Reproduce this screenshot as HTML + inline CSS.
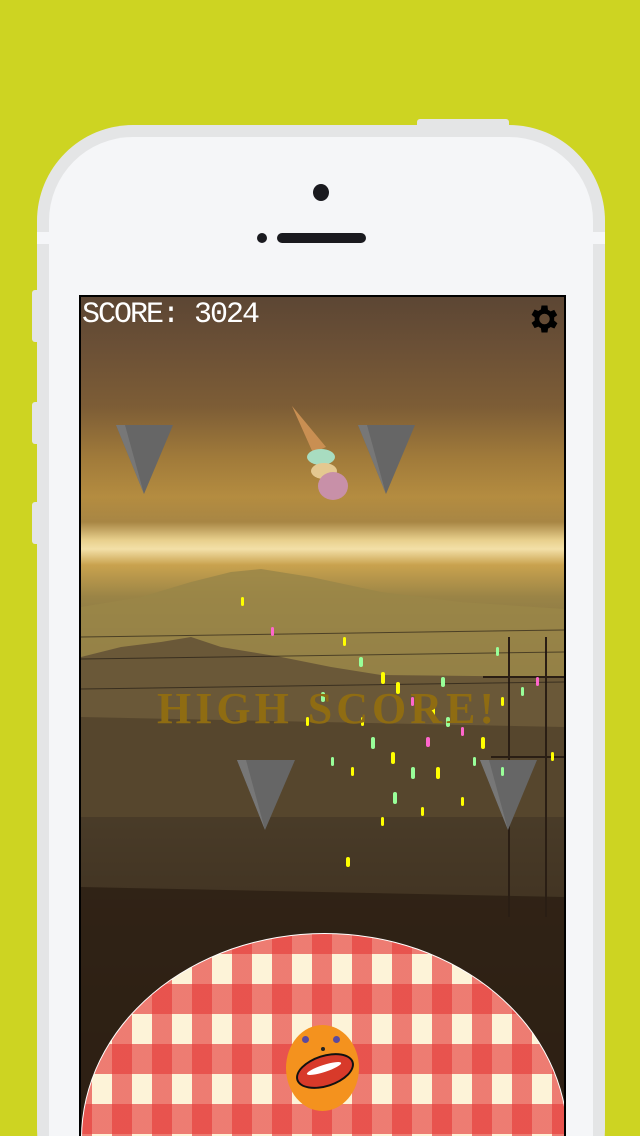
<!DOCTYPE html>
<html><head><meta charset="utf-8"><style>
*{margin:0;padding:0}
html,body{width:640px;height:1136px;overflow:hidden}
body{background:#cdd422;position:relative;font-family:"Liberation Sans",sans-serif}
.abs{position:absolute}
</style></head><body>
<div class="abs" style="left:32px;top:290px;width:8px;height:52px;background:#e4e5e6;border-radius:3px"></div>
<div class="abs" style="left:32px;top:402px;width:8px;height:42px;background:#e4e5e6;border-radius:3px"></div>
<div class="abs" style="left:32px;top:502px;width:8px;height:42px;background:#e4e5e6;border-radius:3px"></div>
<div class="abs" style="left:417px;top:119px;width:92px;height:10px;background:#e4e5e6;border-radius:3px"></div>
<div class="abs" style="left:37px;top:125px;width:568px;height:1100px;background:#e4e5e6;border-radius:96px"></div>
<div class="abs" style="left:49px;top:137px;width:544px;height:1100px;background:#f5f6f8;border-radius:84px"></div>
<div class="abs" style="left:37px;top:232px;width:12px;height:12px;background:#f5f6f8"></div>
<div class="abs" style="left:593px;top:232px;width:12px;height:12px;background:#f5f6f8"></div>
<div class="abs" style="left:313px;top:184px;width:16px;height:17px;background:#1a1a1f;border-radius:50%"></div>
<div class="abs" style="left:257px;top:233px;width:10px;height:10px;background:#1a1a1f;border-radius:50%"></div>
<div class="abs" style="left:277px;top:233px;width:89px;height:10px;background:#1a1a1f;border-radius:5px"></div>
<div class="abs" style="left:79px;top:295px;width:487px;height:845px;background:#000"></div>
<div class="abs" style="left:81px;top:297px;width:483px;height:840px;overflow:hidden;background:linear-gradient(#5c4634 0px,#6e5236 60px,#7d5d36 110px,#a07a3a 160px,#b48c40 200px,#a88644 225px,#e8cf8c 243px,#f3e0a8 252px,#c9a24e 268px,#9a8446 300px,#7a6a42 360px,#5e5038 430px,#4a3e2c 520px,#35291c 620px,#24190f 840px)">
<svg width="483" height="840" style="position:absolute;left:0;top:0">
<polygon points="0,310 60,300 110,285 150,275 180,272 230,280 300,295 380,305 483,312 483,420 0,420" fill="#9a8648" opacity=".85"/>
<polygon points="0,360 40,350 80,345 110,340 140,350 170,355 200,360 250,370 300,378 483,380 483,520 0,520" fill="#6a5838"/>
<polygon points="0,420 483,430 483,840 0,840" fill="#4a3a26" opacity=".6"/>
<polygon points="0,590 483,600 483,840 0,840" fill="#24180e" opacity=".6"/>
<g stroke="#2a1e14" stroke-width="2" fill="none">
<line x1="428" y1="340" x2="428" y2="620"/><line x1="465" y1="340" x2="465" y2="620"/>
<line x1="402" y1="380" x2="483" y2="380"/><line x1="410" y1="460" x2="483" y2="460"/>
</g>
<g stroke="#1a1410" stroke-width="1" opacity=".6" fill="none">
<line x1="0" y1="340" x2="483" y2="333"/><line x1="0" y1="362" x2="483" y2="355"/><line x1="0" y1="392" x2="483" y2="385"/>
</g>
<polygon points="35,128 92,128 63,197" fill="#666"/><polygon points="35,128 44,128 63,197" fill="#777"/>
<polygon points="277,128 334,128 305,197" fill="#666"/><polygon points="277,128 286,128 305,197" fill="#777"/>
<polygon points="156,463 214,463 184,533" fill="#666"/><polygon points="156,463 165,463 184,533" fill="#777"/>
<polygon points="399,463 456,463 427,533" fill="#666"/><polygon points="399,463 408,463 427,533" fill="#777"/>
<polygon points="211,109 245,150 232,156" fill="#c98f52"/>
<ellipse cx="240" cy="160" rx="14" ry="8" fill="#a8dcc0"/>
<ellipse cx="243" cy="174" rx="13" ry="8" fill="#e4c890"/>
<ellipse cx="252" cy="189" rx="15" ry="14" fill="#c890a8"/>
<g>
<rect x="160" y="300" width="3" height="9" rx="1.5" fill="#ff0"/><rect x="190" y="330" width="3" height="9" rx="1.5" fill="#f6c"/>
<rect x="262" y="340" width="3" height="9" rx="1.5" fill="#ff0"/><rect x="278" y="360" width="4" height="10" rx="2" fill="#9f9"/>
<rect x="300" y="375" width="4" height="12" rx="2" fill="#ff0"/><rect x="315" y="385" width="4" height="12" rx="2" fill="#ff0"/>
<rect x="240" y="395" width="4" height="10" rx="2" fill="#9f9"/><rect x="330" y="400" width="3" height="9" rx="1.5" fill="#f6c"/>
<rect x="350" y="410" width="4" height="12" rx="2" fill="#ff0"/><rect x="365" y="420" width="4" height="10" rx="2" fill="#9f9"/>
<rect x="380" y="430" width="3" height="9" rx="1.5" fill="#f6c"/><rect x="400" y="440" width="4" height="12" rx="2" fill="#ff0"/>
<rect x="420" y="400" width="3" height="9" rx="1.5" fill="#ff0"/><rect x="440" y="390" width="3" height="9" rx="1.5" fill="#9f9"/>
<rect x="290" y="440" width="4" height="12" rx="2" fill="#9f9"/><rect x="310" y="455" width="4" height="12" rx="2" fill="#ff0"/>
<rect x="330" y="470" width="4" height="12" rx="2" fill="#9f9"/><rect x="355" y="470" width="4" height="12" rx="2" fill="#ff0"/>
<rect x="270" y="470" width="3" height="9" rx="1.5" fill="#ff0"/><rect x="250" y="460" width="3" height="9" rx="1.5" fill="#9f9"/>
<rect x="312" y="495" width="4" height="12" rx="2" fill="#9f9"/><rect x="340" y="510" width="3" height="9" rx="1.5" fill="#ff0"/>
<rect x="300" y="520" width="3" height="9" rx="1.5" fill="#ff0"/><rect x="265" y="560" width="4" height="10" rx="2" fill="#ff0"/>
<rect x="380" y="500" width="3" height="9" rx="1.5" fill="#ff0"/><rect x="420" y="470" width="3" height="9" rx="1.5" fill="#9f9"/>
<rect x="415" y="350" width="3" height="9" rx="1.5" fill="#9f9"/><rect x="455" y="380" width="3" height="9" rx="1.5" fill="#f6c"/>
<rect x="225" y="420" width="3" height="9" rx="1.5" fill="#ff0"/><rect x="345" y="440" width="4" height="10" rx="2" fill="#f6c"/>
<rect x="392" y="460" width="3" height="9" rx="1.5" fill="#9f9"/><rect x="360" y="380" width="4" height="10" rx="2" fill="#9f9"/>
<rect x="280" y="420" width="3" height="9" rx="1.5" fill="#ff0"/><rect x="470" y="455" width="3" height="9" rx="1.5" fill="#ff0"/>
</g>
</svg>
<div class="abs" style="left:76px;top:386px;font:bold 44px 'Liberation Serif',serif;color:#8f6c12;letter-spacing:4px">HIGH SCORE!</div>
<div class="abs" style="left:1px;top:1px;font:30px 'Liberation Mono',monospace;color:#fff;letter-spacing:-2px">SCORE: 3024</div>
<svg class="abs" style="left:444px;top:4px" width="36" height="36" viewBox="0 0 24 24"><path fill="#000" d="M19.4 13a7.5 7.5 0 0 0 0-2l2.1-1.6-2-3.5-2.5 1a7 7 0 0 0-1.7-1L15 3h-4l-.4 2.7a7 7 0 0 0-1.7 1l-2.5-1-2 3.5L6.5 11a7.5 7.5 0 0 0 0 2l-2.1 1.6 2 3.5 2.5-1a7 7 0 0 0 1.7 1L11 21h4l.4-2.7a7 7 0 0 0 1.7-1l2.5 1 2-3.5zM13 15.5a3.5 3.5 0 1 1 0-7 3.5 3.5 0 0 1 0 7z"/></svg>
<div class="abs" style="left:0;top:636px;width:485px;height:410px;border-radius:50%;border:1px solid #fff;overflow:hidden;background-color:#fdf3d8;background-image:repeating-linear-gradient(90deg,rgba(229,61,59,.65) 0 10px,transparent 10px 30px,rgba(229,61,59,.65) 30px 40px),repeating-linear-gradient(180deg,rgba(229,61,59,.65) 0 20px,transparent 20px 50px,rgba(229,61,59,.65) 50px 60px)"></div>
<div class="abs" style="left:205px;top:728px;width:73px;height:86px;border-radius:50%;background:#f4921e"></div>
<div class="abs" style="left:221px;top:739px;width:7px;height:7px;border-radius:50%;background:#5a4aa0"></div>
<div class="abs" style="left:252px;top:739px;width:7px;height:7px;border-radius:50%;background:#5a4aa0"></div>
<div class="abs" style="left:240px;top:750px;width:4px;height:4px;border-radius:50%;background:#222"></div>
<div class="abs" style="left:214px;top:758px;width:56px;height:28px;border-radius:50%;background:#d83a2a;border:2px solid #111;transform:rotate(-18deg)"></div>
<div class="abs" style="left:225px;top:768px;width:36px;height:7px;border-radius:50%;background:#fff;transform:rotate(-18deg)"></div>
</div>
</body></html>
